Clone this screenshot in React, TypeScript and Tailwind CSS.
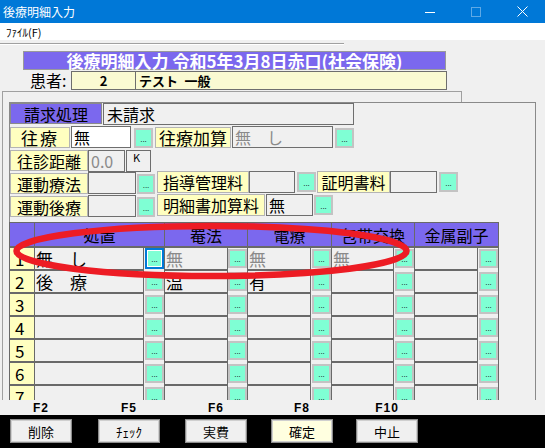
import React from "react";

const FONT = "font-['Noto_Sans_CJK_JP','Noto_Sans',sans-serif]";

function Btn({ className = "" }: { className?: string }) {
  return (
    <div className={`shrink-0 flex border-[2px] border-[#c3c3c3] ${className}`}>
      <div className="flex-1 bg-[#7fffd4] flex items-end justify-center pb-[2px]">
        <span className="text-[8px] leading-none font-['Liberation_Sans',sans-serif] text-black">...</span>
      </div>
    </div>
  );
}

function GridBtn({ focused = false }: { focused?: boolean }) {
  if (focused) {
    return (
      <div className="w-[19px] h-[21px] flex border-[2px] border-[#0078d7]">
        <div className="flex-1 flex border border-white">
          <div className="flex-1 bg-[#7fffd4] flex items-end justify-center pb-[2px]">
            <span className="text-[8px] leading-none font-['Liberation_Sans',sans-serif] text-black">...</span>
          </div>
        </div>
      </div>
    );
  }
  return (
    <div className="w-[19px] h-[19px] mt-[1px] flex border-[2px] border-[#c3c3c3]">
      <div className="flex-1 bg-[#7fffd4] flex items-end justify-center pb-[2px]">
        <span className="text-[8px] leading-none font-['Liberation_Sans',sans-serif] text-black">...</span>
      </div>
    </div>
  );
}

function Label({ className = "", children }: { className?: string; children: React.ReactNode }) {
  return (
    <div
      className={`shrink-0 flex items-center justify-center bg-[#ffffc0] border border-[#b4b4b4] text-[16px] leading-none ${className}`}
    >
      {children}
    </div>
  );
}

function Field({ className = "", children }: { className?: string; children?: React.ReactNode }) {
  return (
    <div className={`shrink-0 flex items-center border border-[#6e6e6e] pl-[2px] text-[16px] leading-none ${className}`}>
      {children}
    </div>
  );
}

type Cell = { t: string; g?: boolean };
const rows: { n: string; c: Cell[]; focus?: boolean }[] = [
  { n: "1", c: [{ t: "無　し" }, { t: "無", g: true }, { t: "無", g: true }, { t: "無", g: true }, { t: "" }], focus: true },
  { n: "2", c: [{ t: "後　療" }, { t: "温" }, { t: "有" }, { t: "" }, { t: "" }] },
  { n: "3", c: [{ t: "" }, { t: "" }, { t: "" }, { t: "" }, { t: "" }] },
  { n: "4", c: [{ t: "" }, { t: "" }, { t: "" }, { t: "" }, { t: "" }] },
  { n: "5", c: [{ t: "" }, { t: "" }, { t: "" }, { t: "" }, { t: "" }] },
  { n: "6", c: [{ t: "" }, { t: "" }, { t: "" }, { t: "" }, { t: "" }] },
  { n: "7", c: [{ t: "" }, { t: "" }, { t: "" }, { t: "" }, { t: "" }] },
];
const textW = ["w-[108px]", "w-[62px]", "w-[62px]", "w-[61px]", "w-[62px]"];
const btnW = ["w-[20px]", "w-[19px]", "w-[20px]", "w-[20px]", "w-[20px]"];

function BottomBtn({ className = "", children }: { className?: string; children: React.ReactNode }) {
  return (
    <div className={`shrink-0 w-[62px] h-[24px] border border-[#8c8c8c] flex ${className}`}>
      <div className="flex-1 border border-[#cfcfcf] flex items-center justify-center text-[13px] leading-none text-black">
        {children}
      </div>
    </div>
  );
}

export default function App() {
  return (
    <div className={`relative w-[545px] h-[448px] overflow-hidden bg-[#f0f0f0] text-black ${FONT}`}>
      {/* title bar */}
      <div className="h-[23px] bg-[#0078d7] flex items-center text-white">
        <span className="ml-[3px] text-[12px] leading-none">後療明細入力</span>
        <div className="ml-auto flex h-full">
          <div className="w-[46px] h-full flex items-center justify-center">
            <svg width="10" height="10" viewBox="0 0 10 10">
              <path d="M0 5.5H10" stroke="white" strokeWidth="1" />
            </svg>
          </div>
          <div className="w-[46px] h-full flex items-center justify-center">
            <svg width="10" height="10" viewBox="0 0 10 10">
              <rect x="0.5" y="0.5" width="9" height="9" stroke="#5ea9e6" fill="none" strokeWidth="1" />
            </svg>
          </div>
          <div className="w-[46px] h-full flex items-center justify-center">
            <svg width="11" height="11" viewBox="0 0 11 11">
              <path d="M0.5 0.5L10.5 10.5M10.5 0.5L0.5 10.5" stroke="white" strokeWidth="1" />
            </svg>
          </div>
        </div>
      </div>

      {/* menu bar */}
      <div className="h-[17px] bg-white flex items-center pl-[6px] pt-[2px] text-[11px] leading-none">ﾌｧｲﾙ(F)</div>

      {/* toolbar separator */}
      <div className="h-[11px] pt-[3px]">
        <div className="w-[344px] h-[2px] border-t border-[#a0a0a0] border-b border-b-white" />
      </div>

      {/* banner */}
      <div className="ml-[23px] w-[423px] h-[19px] border border-[#9a9a9a] bg-[#7b68ee] text-white font-bold text-[17px] leading-none flex items-center justify-center">
        後療明細入力 令和5年3月8日赤口(社会保険)
      </div>

      {/* patient row */}
      <div className="h-[21px] flex items-start">
        <div className="ml-[30px] w-[41px] h-[20px] flex items-center text-[16px] leading-none">患者:</div>
        <div className="mt-[1px] w-[376px] h-[19px] bg-[#fafad2] border border-[#6e6e6e] flex">
          <div className="w-[64px] h-full border-r border-[#6e6e6e] flex items-center justify-center font-bold text-[13px] leading-none">
            2
          </div>
          <div className="flex-1 h-full flex items-center pl-[3px] font-bold text-[13px] leading-none">テスト{"\u2002"}一般</div>
        </div>
      </div>

      {/* main area */}
      <div className="h-[309px] overflow-hidden">
        <div className="ml-[2px] w-[460px] h-[309px] border-t border-l border-r border-[#a0a0a0] pt-[10px]">
          <div className="ml-[6px] w-[527px] h-[400px] border border-[#8a8a8a] bg-[#f0f0f0]">
            {/* row 1 */}
            <div className="flex items-start h-[22px]">
              <div className="shrink-0 w-[92px] h-[21px] bg-[#7b68ee] border border-[#8a8a8a] flex items-center justify-center text-[16px] leading-none">
                請求処理
              </div>
              <Field className="ml-[1px] w-[251px] h-[22px] pl-[3px]">未請求</Field>
            </div>
            {/* row 2 */}
            <div className="mt-[1px] flex items-start h-[22px]">
              <Label className="mt-[1px] w-[60px] h-[21px] text-[17px] tracking-[2px]">往療</Label>
              <Field className="ml-[1px] w-[60px] h-[22px] bg-white">無</Field>
              <Btn className="ml-[3px] mt-[2px] w-[19px] h-[20px]" />
              <Label className="ml-[2px] mt-[1px] w-[76px] h-[21px] text-[17px]">往療加算</Label>
              <Field className="ml-[1px] w-[101px] h-[22px] text-[#8a8a8a]">無　し</Field>
              <Btn className="ml-[2px] mt-[2px] w-[19px] h-[20px]" />
            </div>
            {/* row 3 */}
            <div className="mt-[2px] flex items-start h-[21px]">
              <Label className="w-[78px] h-[21px]">往診距離</Label>
              <Field className="w-[37px] h-[22px] text-[#8a8a8a] text-[15px]">0.0</Field>
              <div className="shrink-0 ml-[1px] w-[25px] h-[22px] border border-[#6e6e6e] pl-[6px] pt-[1px] text-[11px] leading-none">
                K
              </div>
            </div>
            {/* row 4 */}
            <div className="flex items-start h-[23px]">
              <Label className="mt-[2px] w-[78px] h-[21px]">運動療法</Label>
              <Field className="mt-[1px] w-[48px] h-[22px]" />
              <Btn className="ml-[1px] mt-[3px] w-[18px] h-[20px]" />
              <Label className="ml-[2px] w-[92px] h-[22px]">指導管理料</Label>
              <Field className="w-[46px] h-[22px]" />
              <Btn className="ml-[2px] mt-[1px] w-[19px] h-[20px]" />
              <Label className="ml-[1px] w-[73px] h-[22px]">証明書料</Label>
              <Field className="w-[47px] h-[22px]" />
              <Btn className="ml-[2px] mt-[1px] w-[19px] h-[20px]" />
            </div>
            {/* row 5 */}
            <div className="flex items-start h-[23px]">
              <Label className="mt-[2px] w-[78px] h-[21px]">運動後療</Label>
              <Field className="mt-[1px] w-[48px] h-[22px]" />
              <Btn className="ml-[1px] mt-[3px] w-[18px] h-[20px]" />
              <Label className="ml-[2px] w-[108px] h-[22px]">明細書加算料</Label>
              <Field className="ml-[1px] w-[47px] h-[22px]">無</Field>
              <Btn className="ml-[1px] mt-[1px] w-[19px] h-[20px]" />
            </div>

            {/* grid */}
            <div className="-ml-[1px] mt-[5px] w-fit bg-[#696969] px-[1px] pt-[1px] flex flex-col gap-[2px]">
              <div className="flex gap-[1px] h-[23px] text-[16px] leading-none">
                <div className="w-[24px] bg-[#7b68ee]" />
                <div className="w-[129px] bg-[#7b68ee] flex items-center justify-center">処置</div>
                <div className="w-[82px] bg-[#7b68ee] flex items-center justify-center">罨法</div>
                <div className="w-[83px] bg-[#7b68ee] flex items-center justify-center">電療</div>
                <div className="w-[82px] bg-[#7b68ee] flex items-center justify-center">包帯交換</div>
                <div className="w-[83px] bg-[#7b68ee] flex items-center justify-center">金属副子</div>
              </div>
              {rows.map((r) => (
                <div key={r.n} className="flex gap-[1px] h-[21px] items-start">
                  <div className="w-[24px] h-[21px] bg-[#ffffc0] flex items-center pl-[5px] text-[17px] leading-none">
                    {r.n}
                  </div>
                  {r.c.map((c, i) => (
                    <React.Fragment key={i}>
                      <div
                        className={`${textW[i]} h-[21px] bg-[#f0f0f0] flex items-center pl-[1px] text-[17px] leading-none ${
                          c.g ? "text-[#8a8a8a]" : "text-black"
                        }`}
                      >
                        {c.t}
                      </div>
                      <div className={`${btnW[i]} h-[23px] bg-[#f0f0f0] flex justify-end items-start`}>
                        <GridBtn focused={!!r.focus && i === 0} />
                      </div>
                    </React.Fragment>
                  ))}
                </div>
              ))}
            </div>
          </div>
        </div>
      </div>

      {/* function key labels */}
      <div className="h-[15px] flex items-center font-['Liberation_Sans',sans-serif] font-bold text-[12px] leading-none tracking-[1px]">
        <div className="ml-[10px] w-[62px] text-center">F2</div>
        <div className="ml-[26px] w-[62px] text-center">F5</div>
        <div className="ml-[25px] w-[62px] text-center">F6</div>
        <div className="ml-[24px] w-[62px] text-center">F8</div>
        <div className="ml-[23px] w-[62px] text-center">F10</div>
      </div>

      {/* bottom bar */}
      <div className="h-[33px] bg-black flex items-start pt-[4px]">
        <BottomBtn className="ml-[10px] bg-[#f0f0f0]">削除</BottomBtn>
        <BottomBtn className="ml-[26px] bg-[#f0f0f0]">ﾁｪｯｸ</BottomBtn>
        <BottomBtn className="ml-[25px] bg-[#f0f0f0]">実費</BottomBtn>
        <BottomBtn className="ml-[24px] bg-[#ffffe0]">確定</BottomBtn>
        <BottomBtn className="ml-[23px] bg-[#f0f0f0]">中止</BottomBtn>
      </div>

      {/* red annotation ellipse */}
      <svg className="absolute left-0 top-0 pointer-events-none" width="545" height="448" viewBox="0 0 545 448">
        <ellipse cx="211.5" cy="251" rx="195" ry="25" fill="none" stroke="#ed1c24" strokeWidth="6.5" />
      </svg>
    </div>
  );
}
